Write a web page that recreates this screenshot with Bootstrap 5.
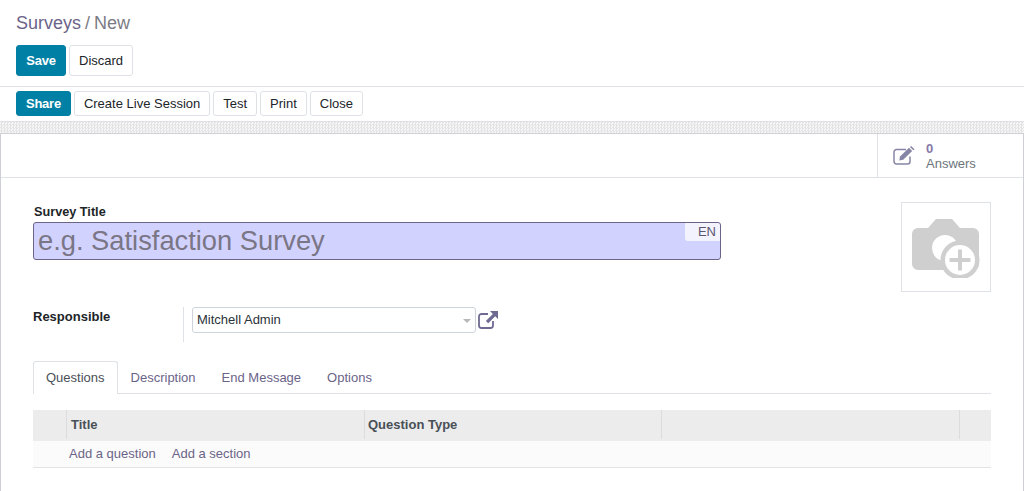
<!DOCTYPE html>
<html lang="en">
<head>
<meta charset="utf-8">
<title>Surveys / New</title>
<link href="https://cdn.jsdelivr.net/npm/bootstrap@5.3.0/dist/css/bootstrap.min.css" rel="stylesheet">
<style>
html,body{height:491px;overflow:hidden}
body{font-family:"Liberation Sans",Arial,sans-serif;font-size:13px;color:#212529;background:#fff}
.cp-head{padding:0 16px;height:86px;border-bottom:1px solid #dee2e6;box-sizing:content-box}
.crumbs{font-size:18px;line-height:21px;padding-top:13px;height:45px;color:#7b7b84;word-spacing:-1px}
.crumbs a{color:#6b6488;text-decoration:none}
.act{font-size:13px;line-height:19px;border-radius:3px;padding:0 9px;background:#fff;border:1px solid #dee2e6;color:#212529;white-space:nowrap}
.act-main{background:#0180a5;border-color:#0180a5;color:#fff;font-weight:700;letter-spacing:-.25px}
.act-lg{height:31px}
.act-save{min-width:50px}
.act-sm{height:25px}
.btn-row{gap:3px}
.statbar{height:34px;padding:4px 16px 0;gap:3px}
.sheet-gap{height:12px;border-top:1px solid #dee2e6;background-color:#f1f1f1;background-image:repeating-conic-gradient(#e4e4e4 0 25%,#f6f6f6 0 50%);background-size:3px 3px}
.sheet{border:1px solid #ced0d6;border-bottom:0;height:358px;background:#fff}
.stat-row{height:44px;border-bottom:1px solid #dee2e6}
.stat-btn{width:146px;border-left:1px solid #dee2e6;padding-left:15px;gap:9px;color:#6c757d;line-height:15px}
.stat-btn b{display:block;font-weight:700;color:#8679a8;font-size:13px}
.form-wrap{padding:24px 32px 0}
.fld-label{font-weight:700;font-size:12.7px;line-height:15px;color:#212529}
.title-label{padding:3px 0 0 1px;margin-bottom:2px}
.title-col{width:688px}
.title-box{height:38px;background:#d2d2ff;border:1px solid #6b6488;border-radius:3px;font-size:27.3px;line-height:35px;padding-left:4px;color:#7a7685}
.lang-tag{top:0;right:0;width:35px;height:18px;background:#f3f3fd;border-radius:0 3px 0 3px;font-size:13px;line-height:18px;text-align:right;padding-right:4px;color:#5b5670}
.img-box{width:90px;height:90px;border:1px solid #dee2e6}
.resp-row{margin-top:15px;height:35px}
.resp-label{width:150px;font-size:13px;padding-top:2px}
.resp-field{border-left:1px solid #dee2e6;padding-left:8px;height:35px}
.resp-select{width:284px;height:26px;border:1px solid #ced4da;border-radius:3px;padding-left:4px;line-height:24px;font-size:13px;color:#2c3338}
.caret-down{right:4px;top:11px;border-left:4px solid transparent;border-right:4px solid transparent;border-top:4px solid #b8b8b8}
.open-ico{margin-top:4px;margin-left:2px}
.tabs-row{margin-top:19px;height:33px;border-bottom:1px solid #dee2e6}
.tab-item{padding:0 13px;line-height:33px;color:#6b6488;text-decoration:none;height:33px;white-space:nowrap}
.tab-on{color:#495057;border:1px solid #dee2e6;border-bottom:0;border-radius:3px 3px 0 0;background:#fff;line-height:32px;padding:0 12px}
.grid-head{margin-top:16px;height:31px;background:#ececec;font-weight:700;color:#495057}
.cell{border-right:1px solid #dcdcdc;padding-left:3px;line-height:29px;height:29px}
.cell-first{padding-left:4px}
.grid-foot{height:27px;background:#fbfbfb;border-bottom:1px solid #e4e4e4;padding-left:36px;gap:16px;line-height:25px}
.grid-foot a{color:#6b6488;text-decoration:none}
</style>
</head>
<body>
<div class="cp-head">
  <div class="crumbs"><a href="#">Surveys</a> / New</div>
  <div class="d-flex btn-row">
    <button class="act act-lg act-main act-save" type="button">Save</button>
    <button class="act act-lg" type="button">Discard</button>
  </div>
</div>
<div class="statbar d-flex align-items-start">
  <button class="act act-sm act-main" type="button">Share</button>
  <button class="act act-sm" type="button">Create Live Session</button>
  <button class="act act-sm" type="button">Test</button>
  <button class="act act-sm" type="button">Print</button>
  <button class="act act-sm" type="button">Close</button>
</div>
<div class="sheet-gap"></div>
<div class="sheet">
  <div class="stat-row d-flex justify-content-end">
    <div class="stat-btn d-flex align-items-center">
      <svg width="24" height="20" viewBox="0 0 24 20" aria-hidden="true">
        <path d="M17 10.500V15.500a2.500 2.500 0 0 1-2.500 2.500H3.500A2.500 2.500 0 0 1 1 15.500V6a2.500 2.500 0 0 1 2.500-2.500H13" fill="none" stroke="#8785a6" stroke-width="1.500"/>
        <path d="M7 10.500l9-8.700 3.200 3.100-9 8.800-3.900.9z" fill="#8785a6"/>
        <path d="M17 1l1.200-1 3.300 3.200-1.200 1.100z" fill="#8785a6"/>
      </svg>
      <div><b>0</b>Answers</div>
    </div>
  </div>
  <div class="form-wrap">
    <div class="d-flex justify-content-between align-items-start">
      <div class="title-col">
        <div class="fld-label title-label">Survey Title</div>
        <div class="title-box position-relative">e.g. Satisfaction Survey<span class="lang-tag position-absolute">EN</span></div>
      </div>
      <div class="img-box d-flex align-items-center justify-content-center">
        <svg width="70" height="62" viewBox="0 0 70 62" aria-hidden="true">
          <path d="M7 12H17L25 3H41L49 12H62a6 6 0 0 1 6 6V48a6 6 0 0 1-6 6H7a6 6 0 0 1-6-6V18a6 6 0 0 1 6-6z" fill="#cfcfcf"/>
          <circle cx="34" cy="32" r="13" fill="#fff"/>
          <circle cx="49" cy="44" r="19.500" fill="#cfcfcf"/>
          <circle cx="49" cy="44" r="15" fill="#fff"/>
          <path d="M47 33.500h4v8.500h8.500v4H51v8.500h-4V46h-8.500v-4H47z" fill="#cfcfcf"/>
        </svg>
      </div>
    </div>
    <div class="d-flex resp-row">
      <div class="resp-label fld-label">Responsible</div>
      <div class="resp-field d-flex align-items-start">
        <div class="resp-select position-relative">Mitchell Admin<span class="caret-down position-absolute"></span></div>
        <svg class="open-ico" width="20" height="18" viewBox="0 0 20 18" aria-hidden="true">
          <path d="M15 10v4.500a2.500 2.500 0 0 1-2.500 2.500H3.500A2.500 2.500 0 0 1 1 14.500V5.500A2.500 2.500 0 0 1 3.500 3H10" fill="none" stroke="#6f6a92" stroke-width="1.800"/>
          <path d="M12 0h8v8l-2.800-2.800-7 7-2.300-2.300 7-7z" fill="#6f6a92"/>
        </svg>
      </div>
    </div>
    <div class="tabs-row d-flex">
      <a class="tab-item tab-on" href="#">Questions</a>
      <a class="tab-item" href="#">Description</a>
      <a class="tab-item" href="#">End Message</a>
      <a class="tab-item" href="#">Options</a>
    </div>
    <div class="grid-head d-flex">
      <div class="cell" style="width:34px"></div>
      <div class="cell cell-first" style="width:298px">Title</div>
      <div class="cell" style="width:297px">Question Type</div>
      <div class="cell" style="width:298px"></div>
      <div class="flex-grow-1"></div>
    </div>
    <div class="grid-foot d-flex"><a href="#">Add a question</a><a href="#">Add a section</a></div>
  </div>
</div>
<script src="https://cdn.jsdelivr.net/npm/bootstrap@5.3.0/dist/js/bootstrap.bundle.min.js"></script>
</body>
</html>
